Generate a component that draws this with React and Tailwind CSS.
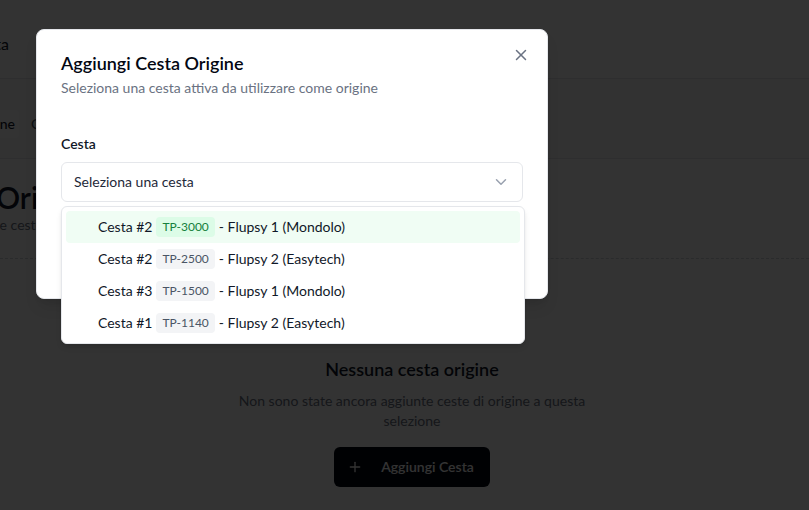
import React from 'react';
import { X, ChevronDown, Plus, Package } from 'lucide-react';

const baskets = [
  { num: 2, code: 'TP-3000', flupsy: 'Flupsy 1 (Mondolo)', active: true },
  { num: 2, code: 'TP-2500', flupsy: 'Flupsy 2 (Easytech)' },
  { num: 3, code: 'TP-1500', flupsy: 'Flupsy 1 (Mondolo)' },
  { num: 1, code: 'TP-1140', flupsy: 'Flupsy 2 (Easytech)' },
];

function BasketItem({ item }) {
  return (
    <div
      className={
        item.active
          ? 'flex h-8 items-center rounded-sm bg-[#f0fdf4] pl-8 pr-2 text-sm text-gray-900'
          : 'flex h-8 items-center rounded-sm pl-8 pr-2 text-sm text-gray-900'
      }
    >
      <span>Cesta #{item.num}</span>
      <span
        className={
          item.active
            ? 'mx-1 inline-flex h-5 items-center rounded px-1.5 text-xs bg-[#dcfce7] text-[#15803d]'
            : 'mx-1 inline-flex h-5 items-center rounded px-1.5 text-xs bg-[#f3f4f6] text-gray-600'
        }
      >
        {item.code}
      </span>
      <span>- {item.flupsy}</span>
    </div>
  );
}

export default function App() {
  return (
    <div className="relative h-[510px] w-[809px] overflow-hidden bg-white font-['Lato',sans-serif] text-gray-900">
      {/* pagina sotto */}
      <header className="flex h-[79px] items-center border-b border-gray-200 pt-[10px]">
        <div className="flex w-[9px] shrink-0 justify-end whitespace-nowrap text-base">Dettaglio Selezione Nuova Cesta</div>
      </header>
      <div className="flex h-[80px] items-center border-b border-gray-200 bg-gray-50 pt-[10px]">
        <div className="flex items-center gap-3 text-sm font-medium">
          <div className="flex h-7 w-[19px] items-center justify-end whitespace-nowrap rounded-r bg-white pr-1">Origine</div>
          <div className="text-gray-600">Ceste Destinazione</div>
        </div>
      </div>
      <div className="flex h-[99px] flex-col justify-center pb-1">
        <h2 className="-ml-1 text-3xl font-semibold leading-9">Origine</h2>
        <div className="flex text-sm text-gray-500">
          <span className="flex w-[7px] shrink-0 justify-end whitespace-nowrap">Seleziona le</span>
          <span className="whitespace-nowrap">&nbsp;ceste di origine per questa selezione</span>
        </div>
      </div>
      <div className="flex flex-col items-center border-t border-dashed border-gray-300 pl-[15px] pt-[30px]">
        <Package size={40} className="text-gray-400" />
        <h3 className="mt-[26px] text-lg font-semibold leading-7">Nessuna cesta origine</h3>
        <p className="mt-[8px] max-w-sm text-center text-sm leading-5 text-gray-500">
          Non sono state ancora aggiunte ceste di origine a questa selezione
        </p>
        <button className="mt-4 flex h-10 items-center gap-[18px] rounded-md bg-gray-950 pl-[13px] pr-4 text-sm font-semibold text-white">
          <Plus size={16} />
          Aggiungi Cesta
        </button>
      </div>

      {/* overlay */}
      <div className="absolute inset-0 bg-black/80" />

      {/* dialog */}
      <div className="absolute left-[36px] top-[29px] w-[512px] rounded-lg border border-gray-200 bg-white p-6 shadow-lg">
        <button className="absolute right-[17px] top-[16px] text-gray-500">
          <X size={18} strokeWidth={2} />
        </button>
        <div className="flex flex-col gap-1.5">
          <h2 className="text-lg font-semibold leading-[18px] text-gray-950">Aggiungi Cesta Origine</h2>
          <p className="text-sm text-gray-500">Seleziona una cesta attiva da utilizzare come origine</p>
        </div>
        <div className="mt-9 flex flex-col gap-2">
          <label className="text-sm font-semibold">Cesta</label>
          <div className="relative">
            <div className="flex h-10 items-center justify-between rounded-md border border-gray-200 bg-white pl-3 pr-3 text-sm text-gray-800">
              <span>Seleziona una cesta</span>
              <ChevronDown size={18} className="text-gray-400" />
            </div>
            <div className="absolute left-0 top-full z-10 mt-1 w-[464px] rounded-md border border-gray-200 bg-white p-1 shadow-md">
              {baskets.map((b) => (
                <BasketItem key={b.code} item={b} />
              ))}
            </div>
          </div>
        </div>
        <div className="mt-8 flex justify-end gap-2">
          <button className="h-10 rounded-md border border-gray-200 px-4 text-sm font-medium">Annulla</button>
          <button className="h-10 rounded-md bg-gray-950 px-4 text-sm font-medium text-white">Aggiungi</button>
        </div>
      </div>
    </div>
  );
}
